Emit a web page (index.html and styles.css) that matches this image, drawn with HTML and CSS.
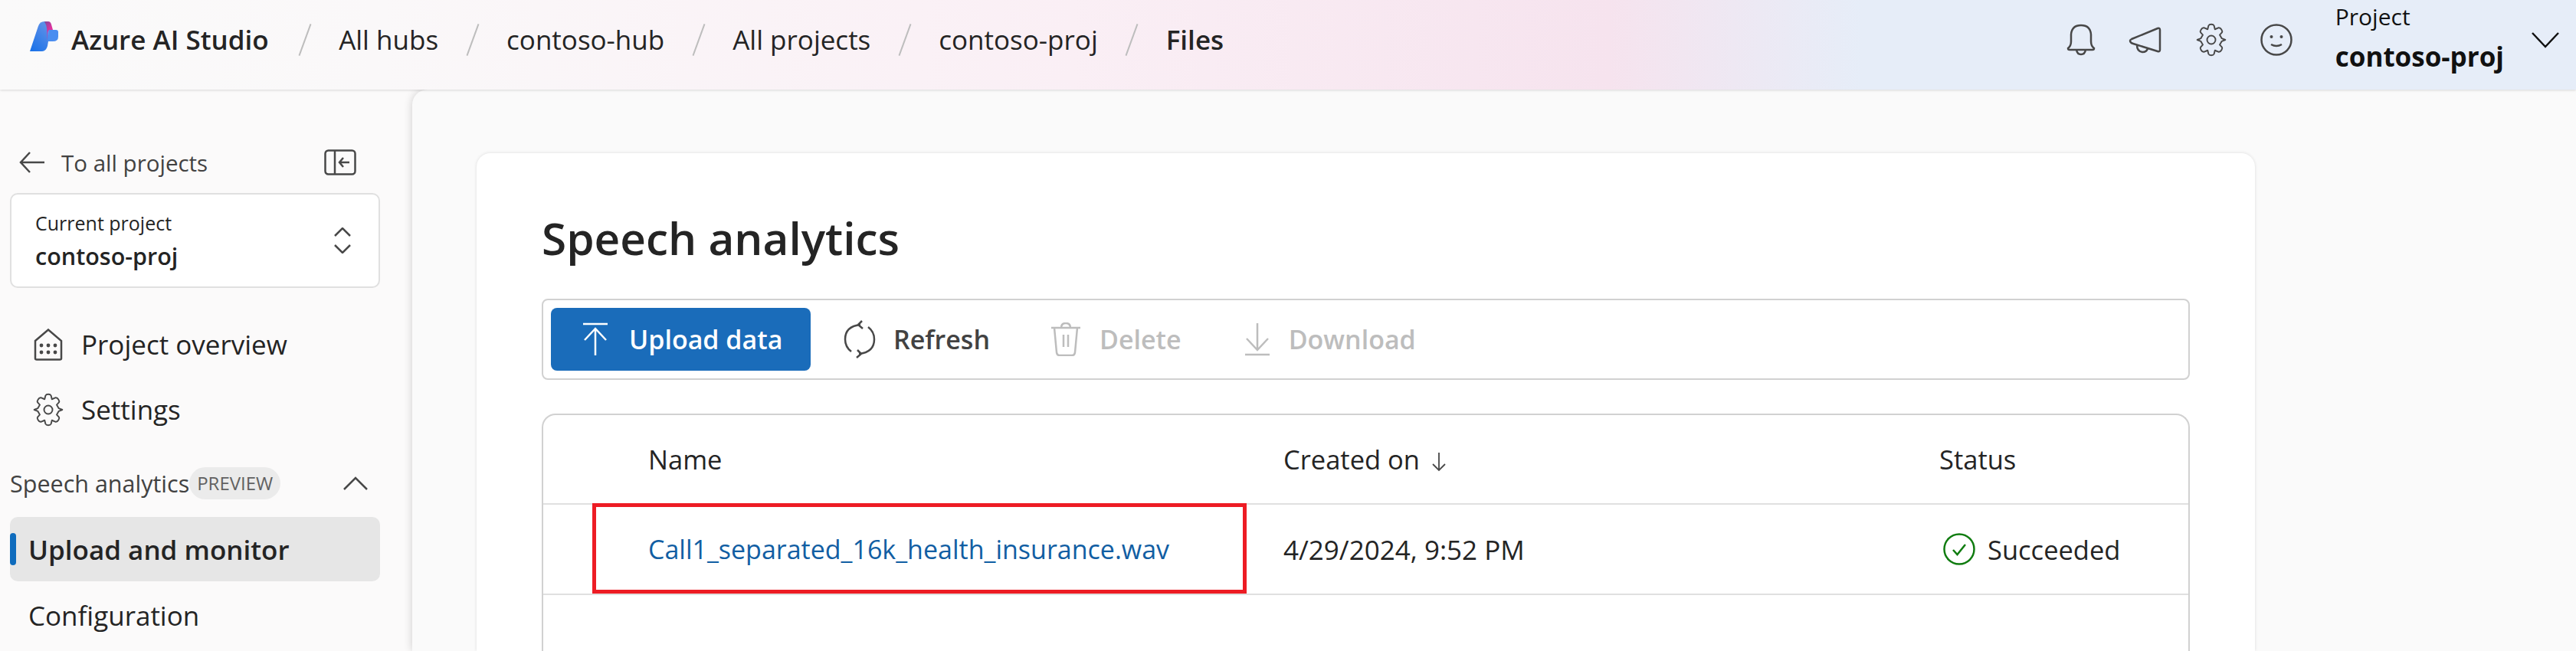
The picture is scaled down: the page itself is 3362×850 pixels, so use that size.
FILE: index.html
```html
<!DOCTYPE html>
<html lang="en-us">
	<head>
		<meta charset="UTF-8">
		<title>Speech analytics - Azure AI Studio</title>
		<link rel="stylesheet" href="styles.css">
	</head>
	<body>
		<header class="topBar"> <!-- Breadcrumb and account -->
			<svg class="logo" width="38" height="40" viewBox="0 0 38 40">
				<defs>
					<linearGradient id="logoBlue" x1="0" y1="1" x2="0.6" y2="0">
						<stop offset="0" stop-color="#1670e8"/>
						<stop offset="1" stop-color="#5a8fe8"/>
					</linearGradient>
					<linearGradient id="logoPink" x1="0" y1="0" x2="0.6" y2="1">
						<stop offset="0" stop-color="#7a4a9c"/>
						<stop offset="0.6" stop-color="#e0319e"/>
						<stop offset="1" stop-color="#d9359f"/>
					</linearGradient>
				</defs>
				<path d="M0 39 L11 6 Q13 0 19 0 L23 0 L25 11 L24 26 L23 32 Q21 39 16 39 Z" fill="url(#logoBlue)"/>
				<path d="M25 11 L34 11 Q37 11 37 14 L37 20 Q37 26 30 26 L23 26 Z" fill="#4a8df0"/>
				<path d="M19 0 L24 0 Q27 0 28 4 L30 11 L25 11 Q23 13 23 18 L22 25 Q24 8 19 0 Z" fill="url(#logoPink)"/>
			</svg>
			<span class="brand">Azure AI Studio</span>
			<nav class="crumbs">
				<span class="crumbSep"></span><a>All hubs</a>
				<span class="crumbSep"></span><a>contoso-hub</a>
				<span class="crumbSep"></span><a>All projects</a>
				<span class="crumbSep"></span><a>contoso-proj</a>
				<span class="crumbSep"></span><a class="crumbCurrent">Files</a>
			</nav>
			<div class="topIcons">
				<svg width="40" height="44" viewBox="0 0 40 44"><path d="M3 33 Q7 30 7 24 L7 15 Q8 3 20 3 Q32 3 33 15 L33 24 Q33 30 37 33 Q37 35 35 35 L5 35 Q3 35 3 33 Z M14 35 Q15 41 20 41 Q25 41 26 35"/></svg>
				<svg width="44" height="40" viewBox="0 0 44 40"><path d="M4 19 L38 5 Q41 4 41 7 L41 33 Q41 36 38 35 L6 25 Q2 24 2 21 Q2 20 4 19 Z M11 27 Q11 35 18 36 Q24 36 25 31"/></svg>
				<svg width="44" height="46" viewBox="0 0 24 24"><use href="#gearShape"/></svg>
				<svg width="42" height="42" viewBox="0 0 42 42"><circle cx="21" cy="21" r="19.500"/><circle class="dot" cx="14.500" cy="17" r="2"/><circle class="dot" cx="27.500" cy="17" r="2"/><path d="M14 27 Q21 31 28 27"/></svg>
			</div>
			<div class="projectPick">
				<div>
					<div class="pickLabel">Project</div>
					<div class="pickName">contoso-proj</div>
				</div>
				<svg width="36" height="22" viewBox="0 0 36 22"><path d="M1 2 L18 20 L35 2"/></svg>
			</div>
		</header>

		<div class="pageBody">
			<aside class="sideNav">
				<div class="backRow">
					<svg width="34" height="28" viewBox="0 0 34 28"><path d="M33 14 L2 14 M14 1 L2 14 L14 27"/></svg>
					<span class="backText">To all projects</span>
					<svg class="collapseIcon" width="42" height="34" viewBox="0 0 42 34"><rect x="1.500" y="1.500" width="39" height="31" rx="4"/><path d="M14 1.500 L14 32.500 M33 17 L20 17 M25 11 L20 17 L25 23"/></svg>
				</div>
				<div class="currentProject">
					<div>
						<div class="currentLabel">Current project</div>
						<div class="currentName">contoso-proj</div>
					</div>
					<svg width="22" height="34" viewBox="0 0 22 34"><path d="M1 11 L11 1 L21 11 M1 23 L11 33 L21 23"/></svg>
				</div>
				<a class="navItem">
					<svg width="44" height="42" viewBox="0 0 38 42"><path d="M2 16 L19 1.500 L36 16 L36 39 Q36 40.500 34 40.500 L4 40.500 Q2 40.500 2 39 Z"/><g class="dots"><circle cx="10" cy="22" r="2.400"/><circle cx="19" cy="22" r="2.400"/><circle cx="28" cy="22" r="2.400"/><circle cx="10" cy="31" r="2.400"/><circle cx="19" cy="31" r="2.400"/><circle cx="28" cy="31" r="2.400"/></g></svg>
					Project overview
				</a>
				<a class="navItem">
					<svg width="44" height="46" viewBox="0 0 24 24"><use href="#gearShape"/></svg>
					Settings
				</a>
				<div class="navGroup">
					<span class="groupName">Speech analytics</span>
					<span class="previewPill">PREVIEW</span>
					<svg class="groupChevron" width="32" height="18" viewBox="0 0 32 18"><path d="M1 17 L16 2 L31 17"/></svg>
				</div>
				<a class="subItem subItemOn">Upload and monitor</a>
				<a class="subItem">Configuration</a>
			</aside>

			<main class="mainPanel">
				<section class="card">
					<h1>Speech analytics</h1>
					<div class="toolbar">
						<button class="primaryBtn">
							<svg width="34" height="44" viewBox="0 0 34 44"><path d="M1 2 L33 2 M17 43 L17 8 M3 23 L17 8 L31 23"/></svg>
							Upload data
						</button>
						<button class="toolBtn refreshBtn">
							<svg width="42" height="50" viewBox="0 0 42 50"><path d="M22 6 Q2 8 2 25 Q2 35 10 41 M20 44 Q40 42 40 25 Q40 15 32 9 M24 1 L19 6 L25 11 M18 39 L23 44 L17 49"/></svg>
							Refresh
						</button>
						<button class="toolBtn offBtn">
							<svg width="40" height="44" viewBox="0 0 40 44"><path d="M1 7 L39 7 M5 7 L8 39 Q8.500 43 12 43 L28 43 Q31.500 43 32 39 L35 7 M14 7 Q14 1 20 1 Q26 1 26 7 M17 16 L17 32 M23 16 L23 32"/></svg>
							Delete
						</button>
						<button class="toolBtn offBtn">
							<svg width="34" height="44" viewBox="0 0 34 44"><path d="M1 42 L33 42 M17 1 L17 36 M3 21 L17 36 L31 21"/></svg>
							Download
						</button>
					</div>
					<div class="fileTable">
						<div class="tableRow tableHead">
							<span>Name</span>
							<span>Created on <svg class="sortArrow" width="20" height="26" viewBox="0 0 20 26"><path d="M10 1 L10 24 M2 16 L10 24 L18 16"/></svg></span>
							<span>Status</span>
						</div>
						<div class="tableRow">
							<a class="fileLink">Call1_separated_16k_health_insurance.wav</a>
							<span class="dateCell">4/29/2024, 9:52 PM</span>
							<span class="statusCell">
								<svg width="42" height="42" viewBox="0 0 42 42"><circle cx="21" cy="21" r="19.500"/><path d="M13 22 L18.500 28 L29 15"/></svg>
								Succeeded
							</span>
							<div class="redBox"></div>
						</div>
					</div>
				</section>
			</main>
		</div>

		<svg class="iconDefs" width="0" height="0">
			<defs>
				<g id="gearShape" fill="none" stroke="#484848" stroke-width="1.050" stroke-linejoin="round">
					<path d="M12 1 Q13.500 1 14 2 L14.600 4.500 L17.300 3.400 Q18.500 3.300 19.300 4.800 Q20 6 19.700 6.600 L18 8.500 L19.500 11 L22 12 L19.500 13 L18 15.500 L19.700 17.400 Q20 18 19.300 19.200 Q18.500 20.700 17.300 20.600 L14.600 19.500 L14 22 Q13.500 23 12 23 Q10.500 23 10 22 L9.400 19.500 L6.700 20.600 Q5.500 20.700 4.700 19.200 Q4 18 4.300 17.400 L6 15.500 L4.500 13 L2 12 L4.500 11 L6 8.500 L4.300 6.600 Q4 6 4.700 4.800 Q5.500 3.300 6.700 3.400 L9.400 4.500 L10 2 Q10.500 1 12 1 Z"/>
					<circle cx="12" cy="12" r="3"/>
				</g>
			</defs>
		</svg>
	</body>
</html>
```
FILE: styles.css
```css
html, body
{
	margin: 0;
	padding: 0;
	height: 850px;
	overflow: hidden;
	background: #FBFAFA;
	font-family: "Open Sans", sans-serif;
	font-size: 34px;
	color: #242424;
}

svg
{
	flex: none;
	fill: none;
	stroke: #484848;
	stroke-width: 2.500;
}

a
{
	color: inherit;
}

.iconDefs
{
	position: absolute;
}

.dot, .dots circle
{
	fill: #484848;
	stroke: none;
}

/* Top bar */

.topBar
{
	display: flex;
	align-items: center;
	height: 117px;
	box-sizing: border-box;
	padding: 0 22px 14px 39px;
	background: linear-gradient(90deg, #FAFAFA 0px, #FAF8F9 500px, #FAEFF5 1400px, #F6E3EE 2100px, #E6EDF8 2430px, #E6EDF8 3362px);
	box-shadow: 0 1px 3px rgba(0, 0, 0, 0.14);
	position: relative;
	z-index: 2;
}

.logo
{
	stroke: none;
	margin-bottom: 7px;
}

.brand
{
	margin-left: 16px;
	font-size: 35px;
	font-weight: 600;
}

.crumbs
{
	display: flex;
	align-items: center;
	gap: 43.500px;
	margin-left: 46px;
	font-size: 35px;
}

.crumbSep
{
	width: 2px;
	height: 44px;
	background: #BDBDBD;
	transform: rotate(20deg);
}

.crumbCurrent
{
	font-weight: 600;
}

.topIcons
{
	display: flex;
	align-items: center;
	gap: 42px;
	margin-left: auto;
}

.projectPick
{
	display: flex;
	align-items: center;
	gap: 36px;
	margin-left: 56px;
	color: #111111;
}

.projectPick svg
{
	stroke: #111111;
}

.pickLabel
{
	font-size: 30px;
	line-height: 40px;
	margin-top: -5px;
}

.pickName
{
	font-size: 35px;
	font-weight: 700;
	line-height: 44px;
	margin-top: 10px;
}

/* Side navigation */

.pageBody
{
	display: flex;
	height: 733px;
}

.sideNav
{
	width: 538px;
	flex: none;
	box-sizing: border-box;
	padding: 75px 42px 0 13px;
}

.backRow
{
	display: flex;
	align-items: center;
	height: 40px;
	padding-left: 12px;
}

.backRow svg
{
	stroke: #484848;
}

.backText
{
	margin-left: 21px;
	font-size: 29.500px;
	color: #424242;
}

.collapseIcon
{
	margin-left: auto;
	margin-right: 31px;
}

.currentProject
{
	display: flex;
	align-items: center;
	justify-content: space-between;
	height: 124px;
	box-sizing: border-box;
	margin-top: 20px;
	padding: 0 36px 0 31px;
	background: #FFFFFF;
	border: 2px solid #E0E0E0;
	border-radius: 10px;
}

.currentLabel
{
	font-size: 25px;
	line-height: 30px;
}

.currentName
{
	font-size: 30.500px;
	font-weight: 600;
	line-height: 36px;
	margin-top: 10px;
}

.navItem
{
	display: flex;
	align-items: center;
	gap: 21px;
	height: 85px;
	padding-left: 28px;
	font-size: 35px;
}

.navItem:first-of-type
{
	margin-top: 31px;
}

.navGroup
{
	display: flex;
	align-items: center;
	height: 98px;
	box-sizing: border-box;
	padding-top: 10px;
	font-size: 30.500px;
	font-weight: 500;
	color: #424242;
}

.groupName
{
	margin-left: 0;
}

.previewPill
{
	padding: 0 10px;
	height: 42px;
	line-height: 42px;
	border-radius: 21px;
	background: #EBEBEB;
	font-size: 24px;
	font-weight: 400;
	color: #616161;
}

.groupChevron
{
	margin-left: auto;
	margin-right: 16px;
}

.subItem
{
	display: flex;
	align-items: center;
	height: 84px;
	margin-bottom: 2px;
	padding-left: 24px;
	border-radius: 10px;
	font-size: 35px;
}

.subItemOn
{
	position: relative;
	background: #E6E6E6;
	font-weight: 600;
}

.subItemOn::before
{
	content: "";
	position: absolute;
	left: 0;
	top: 21px;
	width: 8px;
	height: 42px;
	border-radius: 4px;
	background: #0F6CBD;
}

/* Main panel */

.mainPanel
{
	flex: 1;
	box-sizing: border-box;
	height: 733px;
	padding: 83px 0 0 84px;
	background: #FAFAFA;
	border-top-left-radius: 20px;
	box-shadow: 0 0 12px rgba(0, 0, 0, 0.18);
}

.card
{
	width: 2321px;
	height: 650px;
	box-sizing: border-box;
	padding: 0 85px;
	background: #FFFFFF;
	border-radius: 18px 18px 0 0;
	box-shadow: 0 0 4px rgba(0, 0, 0, 0.12);
}

h1
{
	margin: 0;
	height: 190px;
	box-sizing: border-box;
	padding-top: 69px;
	line-height: 82px;
	font-size: 58.500px;
	font-weight: 600;
}

.toolbar
{
	display: flex;
	align-items: center;
	height: 106px;
	box-sizing: border-box;
	padding-left: 10px;
	background: #FFFFFF;
	border: 2px solid #D1D1D1;
	border-radius: 8px;
}

button
{
	display: flex;
	align-items: center;
	border: none;
	background: none;
	font-family: inherit;
	font-size: 34px;
	font-weight: 600;
	padding: 0;
}

.primaryBtn
{
	width: 339px;
	height: 82px;
	padding-left: 41px;
	gap: 27px;
	background: #1A6CBA;
	border-radius: 8px;
	color: #FFFFFF;
}

.primaryBtn svg
{
	stroke: #FFFFFF;
}

.toolBtn
{
	gap: 23px;
	color: #424242;
}

.refreshBtn
{
	margin-left: 43px;
}

.offBtn
{
	gap: 24px;
	margin-left: 79px;
	color: #BDBDBD;
}

.offBtn + .offBtn
{
	margin-left: 82px;
}

.offBtn svg
{
	stroke: #BDBDBD;
}

.fileTable
{
	margin-top: 44px;
	height: 310px;
	box-sizing: border-box;
	background: #FFFFFF;
	border: 2px solid #D1D1D1;
	border-bottom: none;
	border-radius: 18px 18px 0 0;
}

.tableRow
{
	position: relative;
	display: grid;
	grid-template-columns: 829px 856px 1fr;
	align-items: center;
	height: 118px;
	box-sizing: border-box;
	padding-left: 137px;
	border-bottom: 2px solid #E0E0E0;
	font-size: 34.500px;
}

.tableHead
{
	height: 117px;
	color: #242424;
}

.sortArrow
{
	vertical-align: -3px;
	margin-left: 6px;
	stroke-width: 1.800;
}

.fileLink
{
	color: #115EA3;
	font-size: 34px;
}

.dateCell
{
	font-size: 35px;
}

.statusCell
{
	display: flex;
	align-items: center;
	gap: 16px;
	margin-left: 5px;
}

.statusCell svg
{
	stroke: #107C10;
}

.redBox
{
	position: absolute;
	left: 64px;
	top: -2px;
	width: 854px;
	height: 118px;
	box-sizing: border-box;
	border: 5px solid #ED1C24;
}
```
